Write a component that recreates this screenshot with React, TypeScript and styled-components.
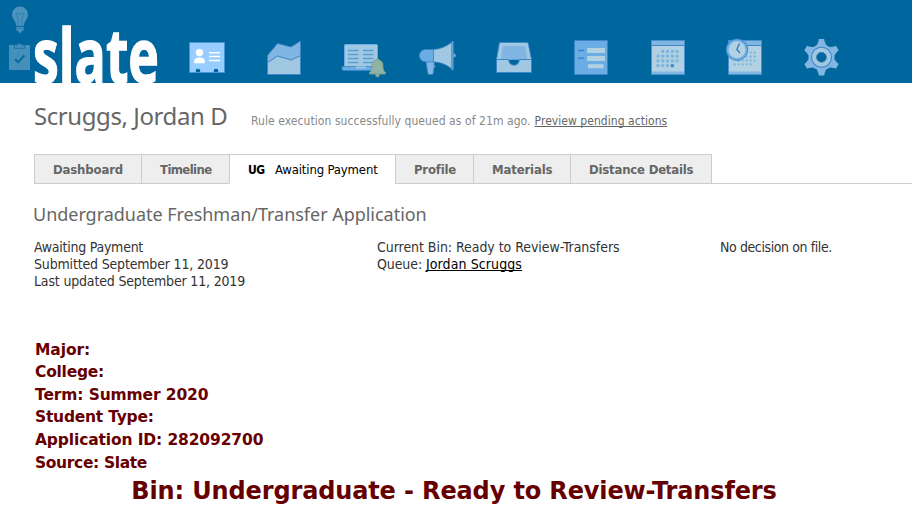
import React from 'react';
import styled, { createGlobalStyle } from 'styled-components';

const GlobalStyle = createGlobalStyle`
  body {
    margin: 0;
    background: #fff;
    color: #333;
    font-family: "DejaVu Sans Condensed", "DejaVu Sans", Tahoma, sans-serif;
    font-size: 14px;
  }
`;

const Header = styled.header`
  display: flex;
  height: 83px;
  background: #00669e;
`;

const Brand = styled.div`
  display: flex;
  width: 168px;
  flex: none;
  svg { display: block; overflow: visible; }
`;

const Nav = styled.nav`
  display: flex;
  padding-top: 33px;
`;

const NavItem = styled.svg`
  display: block;
  width: 77px;
  height: 50px;
`;

const Text = styled.span<{ $track?: number }>`
  letter-spacing: ${(p) => p.$track ?? 0}px;
  white-space: pre;
`;

const TitleRow = styled.div`
  display: flex;
  align-items: baseline;
  padding: 17px 0 0 34px;
  height: 54px;
`;

const Title = styled.h1`
  margin: 0;
  width: 217px;
  font-family: "Noto Sans", sans-serif;
  font-size: 24px;
  font-weight: 400;
  line-height: 32px;
  color: #666;
`;

const Status = styled.p`
  margin: 0;
  font-size: 12px;
  color: #888;
`;

const StatusLink = styled.a`
  color: #666;
  text-decoration: underline;
  text-underline-offset: 1px;
  text-decoration-skip-ink: none;
  margin-left: 4px;
`;

const TabBar = styled.div`
  display: flex;
  margin-left: 34px;
  height: 30px;
`;

const Tab = styled.div<{ $width: number; $active?: boolean }>`
  box-sizing: border-box;
  width: ${(p) => p.$width}px;
  flex: none;
  padding-left: 18px;
  border: 1px solid #ccc;
  border-width: 1px 0 1px 1px;
  border-bottom-color: ${(p) => (p.$active ? '#fff' : '#ccc')};
  background: ${(p) => (p.$active ? '#fff' : '#eee')};
  color: ${(p) => (p.$active ? '#000' : '#666')};
  font-size: 13px;
  font-weight: ${(p) => (p.$active ? 400 : 700)};
  line-height: 29px;
  white-space: nowrap;
`;

const TabBadge = styled.b`
  display: inline-block;
  width: 27px;
  font-size: 12px;
  letter-spacing: -0.4px;
`;

const TabFill = styled.div`
  flex: 1;
  border-left: 1px solid #ccc;
  border-bottom: 1px solid #ccc;
`;

const Heading = styled.h2`
  margin: 18px 0 0 33px;
  font-family: "Noto Sans", sans-serif;
  font-size: 18px;
  font-weight: 400;
  line-height: 24px;
  color: #666;
`;

const Details = styled.div`
  display: grid;
  grid-template-columns: 343px 343px 1fr;
  margin: 13px 0 0 34px;
  height: 51px;
  line-height: 17px;
`;

const QueueLink = styled.a`
  color: #000;
  text-decoration: underline;
  text-underline-offset: 1px;
  text-decoration-skip-ink: none;
`;

const Facts = styled.div`
  margin: 48.6px 0 0 35px;
  font-family: "DejaVu Sans", Verdana, sans-serif;
  font-size: 15.5px;
  font-weight: 700;
  line-height: 22.6px;
  color: #600;
`;

const Bin = styled.div`
  margin-right: 4px;
  font-family: "DejaVu Sans", Verdana, sans-serif;
  font-size: 24px;
  font-weight: 700;
  line-height: 34px;
  text-align: center;
  color: #600;
`;

const LINE = '#3d85c6';
const MID = '#80b6e1';
const PALE = '#a0c8e2';
const SKY = '#6aade4';

const SideIcons = () => (
  <svg width="33" height="83" viewBox="0 0 33 83">
    <g fill="#4a93bd">
      <path d="M20 6.500a8 8 0 0 1 8 8c0 4.500-3.700 6-4.200 11.500h-7.600C15.700 20.500 12 19 12 14.500a8 8 0 0 1 8-8z" />
      <path d="M16.200 27h7.600v3.300l-2 .7-.8 1.700h-2l-.8-1.700-2-.7z" />
    </g>
    <path d="M18 25.500v-7l-2-4.500 2-1 2 2 2-2 2 1-2 4.500v7M16 28.500h8" fill="none" stroke="#267db0" strokeWidth=".9" />
    <path d="M9 45h21v25H9z" fill="#4590bb" />
    <path d="M14.500 45h3a2.200 2.200 0 0 1 4.200 0h3v3.300h-10.200z" fill="#4590bb" stroke="#1673a8" strokeWidth=".9" />
    <path d="M15 59l3.200 3.200 6.300-7" fill="none" stroke="#0d6ca3" strokeWidth="2.300" />
  </svg>
);

const Logo = () => (
  <svg width="135" height="83" viewBox="33 0 135 83">
    <text
      x="33"
      y="82.500"
      fill="#fff"
      stroke="#fff"
      strokeWidth="1.400"
      fontFamily='"Open Sans", sans-serif'
      fontWeight="700"
      fontSize="76"
      textLength="126"
      lengthAdjust="spacingAndGlyphs"
    >
      slate
    </text>
  </svg>
);

const ContactCard = () => (
  <>
    <path d="M189.500 42.500h35v30h-35z" fill="#99ccff" stroke="#4a94d4" />
    <g fill="#fff">
      <circle cx="199.500" cy="52.600" r="3.700" />
      <path d="M194 63.200c0-4 1.500-5.700 5.500-5.700s5.500 1.700 5.500 5.700z" />
      <path d="M209 52h11v1.500h-11zM209 55.800h11v1.500h-11zM209 59.800h11v1.500h-11z" />
    </g>
    <g fill="#00669e">
      <circle cx="198" cy="71" r="2.300" />
      <circle cx="216" cy="71" r="2.300" />
    </g>
    <path d="M189.500 72.500h35" stroke="#4a94d4" />
  </>
);

const AreaChart = () => (
  <g stroke={LINE} strokeWidth="1">
    <path d="M267.500 55.500L277.500 43.500 291 47l9.500-6V74h-33z" fill={MID} />
    <path d="M267.500 62.500l10-6.500L291 60l9.500-4.500V74.500h-33z" fill={PALE} />
  </g>
);

const Reader = () => (
  <>
    <rect x="344.500" y="44.500" width="33" height="24" rx="1" fill={PALE} stroke={SKY} />
    <path d="M342 66.500h38v2c0 1-.5 2-2 2h-34c-1.500 0-2-1-2-2z" fill={SKY} stroke={LINE} strokeWidth=".8" />
    <path d="M356 66.500h10v2h-10z" fill={PALE} />
    <path d="M348 50.500h10.500M348 54.500h10.500M348 58.500h10.500M348 62.500h10.500M363 50.500h10.500M363 54.500h10.500M363 58.500h10.500M363 62.500h10.500" stroke="#5a9fd4" strokeWidth="1.300" />
    <g fill="#8fb3a6" stroke="#7d9a80" strokeWidth=".9">
      <circle cx="377.500" cy="75" r="1.900" />
      <path d="M377.500 58.500c.8 0 1.200.5 1.200 1.300 3.200.9 4.300 3.200 4.300 6.200 0 4 .8 5 2.500 6.500v1.500h-16v-1.500c1.700-1.500 2.500-2.500 2.500-6.500 0-3 1.100-5.300 4.300-6.200 0-.8.400-1.300 1.200-1.300z" />
    </g>
  </>
);

const Megaphone = () => (
  <g stroke={LINE} strokeWidth=".8">
    <path d="M426 61.500h8.500l-.5 4 1.500 1-1.500 1-.8 5.500c0 1.200-.8 1.500-2 1.500h-1.700c-1 0-1.500-.5-1.700-1.500z" fill={MID} />
    <circle cx="454" cy="55.500" r="1.800" fill={MID} />
    <path d="M433.500 49.500h-8a6 6 0 0 0 0 12.300h8z" fill={SKY} />
    <path d="M433.500 49.500c7-.5 13-3 18.500-7.500v27c-5.500-4.500-11.500-6.700-18.500-7.200z" fill={PALE} />
    <path d="M451.800 41.500h1.500v28.500h-1.500z" fill={MID} />
  </g>
);

const Inbox = () => (
  <>
    <path d="M499.500 42.500h28.500l3.500 17h-35z" fill={PALE} stroke={LINE} strokeWidth=".8" />
    <path d="M503 46h22l2.500 13.500h-27z" fill={MID} />
    <path d="M496.500 59.500h11.500c1 0 .8 1 1 2a5.200 5.200 0 0 0 10 0c.2-1 0-2 1-2h11.500v13h-35z" fill={PALE} stroke={LINE} />
  </>
);

const FormIcon = () => (
  <>
    <path d="M574.500 40.500h33v34h-33z" fill={SKY} stroke={LINE} />
    <path d="M587 48h18v5h-18zM587 56h18v5h-18zM588 64.300h15.500v4H588z" fill="#b2d2e4" />
    <path d="M578 50.500h6M578 58.300h6" stroke={LINE} strokeWidth="1.500" />
  </>
);

const Dots = ({ xs, y, size }: { xs: number[]; y: number; size: number }) => (
  <>
    {xs.map((x) => (
      <rect key={x} x={x - size / 2} y={y - size / 2} width={size} height={size} fill="#7db4de" />
    ))}
  </>
);

const CalendarFrame = ({ x }: { x: number }) => (
  <>
    <path d={`M${x} 40.500h33v34h-33z`} fill="#b2d2e4" />
    <path d={`M${x} 41h33v4.500h-33zM${x} 71.500h33v3h-33z`} fill={MID} />
    <path d={`M${x} 45.500h33`} stroke={LINE} />
    <path d={`M${x} 40.500h33v34h-33z`} fill="none" stroke="#4a90cc" />
  </>
);

const cols = [658, 662.8, 667.5, 672.3, 677];
const Calendar = () => (
  <>
    <CalendarFrame x={651.5} />
    <Dots xs={cols.slice(1)} y={51.4} size={3} />
    <Dots xs={cols} y={56.1} size={3} />
    <Dots xs={cols} y={60.9} size={3} />
    <Dots xs={cols.slice(0, 3)} y={65.6} size={3} />
    <rect x="670.800" y="64.200" width="3" height="3" fill={LINE} />
  </>
);

const small = [734.7, 738.7, 742.6, 746.6, 750.6, 754.6];
const Scheduler = () => (
  <>
    <CalendarFrame x={728.5} />
    <Dots xs={small.slice(4)} y={52.6} size={2} />
    <Dots xs={small.slice(3)} y={56.6} size={2} />
    <Dots xs={small.slice(1)} y={60.5} size={2} />
    <Dots xs={small.slice(0, 5)} y={64.4} size={2} />
    <circle cx="737" cy="49.700" r="10.800" fill={SKY} stroke={LINE} strokeWidth=".9" />
    <circle cx="737" cy="49.700" r="8.500" fill="#b2d2e4" />
    <path d="M739.500 43.500L736.800 49.500l3.200 3.500" fill="none" stroke="#3578ae" strokeWidth="1.300" />
  </>
);

const Gear = () => (
  <>
    <g fill={MID}>
      {[0, 60, 120, 180, 240, 300].map((a) => (
        <path key={a} d="M816 47l2.500-6 .3-2h5.400l.3 2 2.500 6z" transform={`rotate(${a} 821.500 57.300)`} />
      ))}
      <circle cx="821.500" cy="57.300" r="13" />
    </g>
    <circle cx="821.500" cy="57.300" r="10" fill={PALE} stroke={LINE} strokeWidth="1.100" />
    <circle cx="821.500" cy="57.300" r="5" fill="#00669e" stroke="#3d85b8" strokeWidth=".8" />
  </>
);

const navIcons = [ContactCard, AreaChart, Reader, Megaphone, Inbox, FormIcon, Calendar, Scheduler, Gear];

const facts: [string, number][] = [
  ['Major:', -0.1],
  ['College:', -0.25],
  ['Term: Summer 2020', -0.13],
  ['Student Type:', -0.23],
  ['Application ID: 282092700', -0.13],
  ['Source: Slate', -0.36],
];

export default function App() {
  return (
    <>
      <GlobalStyle />
      <Header>
        <Brand>
          <SideIcons />
          <Logo />
        </Brand>
        <Nav>
          {navIcons.map((Icon, i) => (
            <NavItem key={i} viewBox={`${168 + 77 * i} 33 77 50`}>
              <Icon />
            </NavItem>
          ))}
        </Nav>
      </Header>
      <TitleRow>
        <Title><Text $track={-0.42}>Scruggs, Jordan D</Text></Title>
        <Status>
          <Text $track={0.07}>Rule execution successfully queued as of 21m ago.</Text>
          <StatusLink><Text $track={0.05}>Preview pending actions</Text></StatusLink>
        </Status>
      </TitleRow>
      <TabBar>
        <Tab $width={107}><Text $track={-0.15}>Dashboard</Text></Tab>
        <Tab $width={88}><Text $track={-0.6}>Timeline</Text></Tab>
        <Tab $width={166} $active>
          <TabBadge>UG</TabBadge>
          <Text $track={-0.15}>Awaiting Payment</Text>
        </Tab>
        <Tab $width={78}><Text $track={-0.2}>Profile</Text></Tab>
        <Tab $width={97}><Text $track={-0.15}>Materials</Text></Tab>
        <Tab $width={141}><Text $track={-0.2}>Distance Details</Text></Tab>
        <TabFill />
      </TabBar>
      <Heading><Text $track={-0.03}>Undergraduate Freshman/Transfer Application</Text></Heading>
      <Details>
        <div>
          <div><Text $track={-0.25}>Awaiting Payment</Text></div>
          <div><Text $track={-0.17}>Submitted September 11, 2019</Text></div>
          <div><Text $track={-0.17}>Last updated September 11, 2019</Text></div>
        </div>
        <div>
          <div><Text $track={-0.05}>Current Bin: Ready to Review-Transfers</Text></div>
          <div><Text $track={-0.1}>Queue: </Text><QueueLink><Text $track={0.1}>Jordan Scruggs</Text></QueueLink></div>
        </div>
        <div><Text $track={-0.4}>No decision on file.</Text></div>
      </Details>
      <Facts>
        {facts.map(([label, track]) => (
          <div key={label}><Text $track={track}>{label}</Text></div>
        ))}
      </Facts>
      <Bin><Text $track={-0.13}>Bin: Undergraduate - Ready to Review-Transfers</Text></Bin>
    </>
  );
}
